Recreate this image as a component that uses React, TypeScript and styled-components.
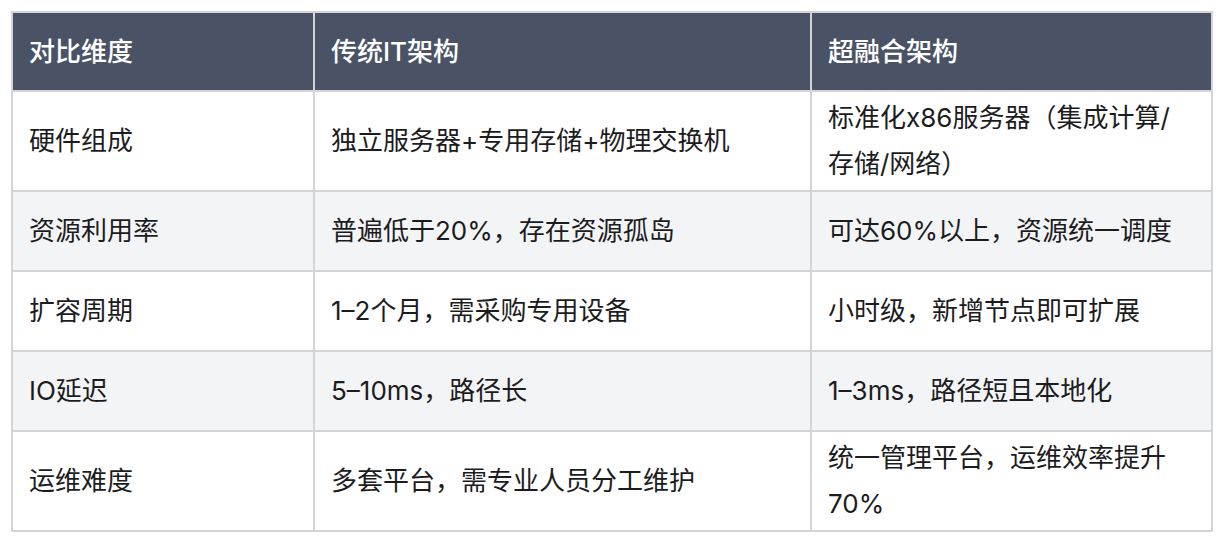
import styled, {createGlobalStyle} from 'styled-components';

const borderColor = '#d3d4d8';

const GlobalStyle = createGlobalStyle`
  body {
    margin: 0;
    background: #ffffff;
    font-family: "Inter", "Noto Sans CJK SC", sans-serif;
  }
`

const Page = styled.div`
  padding: 11px;
`

const CompareTable = styled.table`
  border-collapse: collapse;
  table-layout: fixed;
  width: 1200px;
  font-size: 26px;
  color: #1c1c1e;
  border: 2px solid ${borderColor};
`

const Col = styled.col<{ $width: number }>`
  width: ${props => props.$width}px;
`

const HeadCell = styled.th`
  height: 79px;
  padding: 0 16px;
  background: #4a5366;
  color: #ffffff;
  font-weight: 500;
  text-align: left;
  line-height: 46px;
  border: 2px solid ${borderColor};
  box-sizing: border-box;
`

const Row = styled.tr<{ $striped: boolean }>`
  background: ${props => props.$striped ? '#f3f4f6' : '#ffffff'};
`

const Cell = styled.td`
  height: 80px;
  padding: 3px 16px;
  line-height: 46px;
  vertical-align: middle;
  border: 2px solid ${borderColor};
  box-sizing: border-box;
`

const columns = [
  {title: '对比维度', width: 302},
  {title: '传统IT架构', width: 497},
  {title: '超融合架构', width: 401},
];

const rows = [
  ['硬件组成', '独立服务器+专用存储+物理交换机', '标准化x86服务器（集成计算/存储/网络）'],
  ['资源利用率', '普遍低于20%，存在资源孤岛', '可达60%以上，资源统一调度'],
  ['扩容周期', '1–2个月，需采购专用设备', '小时级，新增节点即可扩展'],
  ['IO延迟', '5–10ms，路径长', '1–3ms，路径短且本地化'],
  ['运维难度', '多套平台，需专业人员分工维护', '统一管理平台，运维效率提升70%'],
];

function App() {
  return (
    <Page>
      <GlobalStyle />
      <CompareTable>
        <colgroup>
          {columns.map(c => <Col key={c.title} $width={c.width} />)}
        </colgroup>
        <thead>
          <tr>
            {columns.map(c => <HeadCell key={c.title}>{c.title}</HeadCell>)}
          </tr>
        </thead>
        <tbody>
          {rows.map((row, i) => (
            <Row key={row[0]} $striped={i % 2 === 1}>
              {row.map((text, j) => <Cell key={j}>{text}</Cell>)}
            </Row>
          ))}
        </tbody>
      </CompareTable>
    </Page>
  )
}

export default App;
